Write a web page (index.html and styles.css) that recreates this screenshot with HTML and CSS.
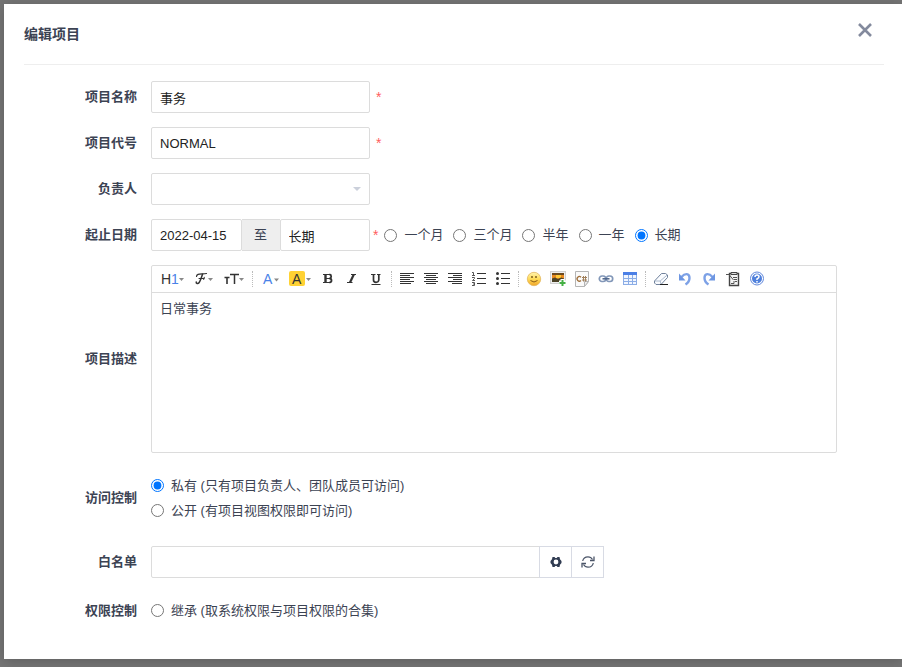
FILE: index.html
```html
<!DOCTYPE html>
<html lang="zh-CN">
<head>
<meta charset="utf-8">
<meta name="viewport" content="width=device-width, initial-scale=1">
<title>编辑项目</title>
<link rel="stylesheet" href="styles.css">
</head>
<body>
<main class="modal">
  <header class="modal-header">
    <h1>编辑项目</h1>
    <button class="close" type="button" aria-label="关闭">
      <svg width="14" height="14" viewBox="0 0 14 14"><path d="M1 1l12 12M13 1L1 13" stroke="#838a9d" stroke-width="2.600" fill="none"/></svg>
    </button>
  </header>
  <form class="form">
    <div class="row">
      <label class="name" for="name">项目名称</label>
      <div class="field"><input class="control" id="name" type="text" value="事务"><span class="required">*</span></div>
    </div>
    <div class="row">
      <label class="name" for="code">项目代号</label>
      <div class="field"><input class="control" id="code" type="text" value="NORMAL"><span class="required">*</span></div>
    </div>
    <div class="row">
      <label class="name" for="owner">负责人</label>
      <div class="field">
        <div class="picker">
          <select class="control" id="owner"><option></option></select>
          <svg class="picker-arrow" width="8" height="4" viewBox="0 0 8 4"><path d="M0 0h8L4 4z" fill="#cbd0db"/></svg>
        </div>
      </div>
    </div>
    <div class="row">
      <label class="name" for="begin">起止日期</label>
      <div class="field dates">
        <div class="range">
          <input class="control" id="begin" type="text" value="2022-04-15">
          <span class="addon">至</span>
          <input class="control" id="end" type="text" value="长期" aria-label="结束日期">
        </div>
        <span class="required">*</span>
        <div class="options">
          <label class="radio"><input type="radio" name="delta">一个月</label>
          <label class="radio"><input type="radio" name="delta">三个月</label>
          <label class="radio"><input type="radio" name="delta">半年</label>
          <label class="radio"><input type="radio" name="delta">一年</label>
          <label class="radio"><input type="radio" name="delta" checked>长期</label>
        </div>
      </div>
    </div>
    <div class="row">
      <label class="name" for="desc">项目描述</label>
      <div class="editor">
        <div class="toolbar">
          <button class="tool wide" type="button" aria-label="标题"><svg width="30" height="24" viewBox="0 0 30 24"><text class="glyph" x="2" y="17" fill="#333">H</text><text class="glyph" x="12" y="17" fill="#4a82e8">1</text><path d="M20 11h5l-2.500 3z" fill="#888"/></svg></button>
          <button class="tool wide" type="button" aria-label="字体"><svg width="30" height="24" viewBox="0 0 30 24"><g fill="none" stroke="#333" stroke-linecap="round"><path d="M7.500 9.500C7.500 6 12 7.300 17.500 6.500" stroke-width="1.200"/><path d="M13.500 7.300c-1 3-2 6.500-3.500 8.400-1 1.300-3 .8-2.800-.6" stroke-width="1.500"/><path d="M10 11.500h5M15.300 10.300l-.6 2.200" stroke-width="1"/></g><path d="M19 11h5l-2.500 3z" fill="#888"/></svg></button>
          <button class="tool wide" type="button" aria-label="字号"><svg width="30" height="24" viewBox="0 0 30 24"><path d="M5.500 10.500h5M8 10.500V17" stroke="#333" stroke-width="1.600"/><path d="M11 7.500h9M15.500 7.500V17" stroke="#333" stroke-width="1.500"/><path d="M20 11h5l-2.500 3z" fill="#888"/></svg></button>
          <span class="sep"></span>
          <button class="tool wide" type="button" aria-label="文字颜色"><svg width="30" height="24" viewBox="0 0 30 24"><text class="glyph" x="7" y="17" fill="#4a82e8">A</text><path d="M18 11.500h5l-2.500 3z" fill="#888"/></svg></button>
          <button class="tool wide" type="button" aria-label="背景颜色"><svg width="30" height="24" viewBox="0 0 30 24"><rect x="3" y="4" width="16" height="15" rx="2" fill="#ffd234"/><text class="glyph" x="6" y="17" fill="#333">A</text><path d="M20 11h5l-2.500 3z" fill="#888"/></svg></button>
          <button class="tool" type="button" aria-label="粗体"><svg width="16" height="16" viewBox="0 0 16 16"><g fill="none" stroke="#333"><path d="M3 3.500h7M3 11.500h7"/><path d="M5.500 3v9" stroke-width="2.400"/><path d="M6 7.500h4" /><path d="M9.500 3.500q1.700.2 1.700 1.900T9.500 7.500q2 .2 2 2t-2 2" stroke-width="1.800"/></g></svg></button>
          <button class="tool" type="button" aria-label="斜体"><svg width="16" height="16" viewBox="0 0 16 16"><path d="M7 3.500h5M3 11.500h5.500" stroke="#333"/><path d="M9.800 3.500L6 11.500" stroke="#333" stroke-width="2.200"/></svg></button>
          <button class="tool" type="button" aria-label="下划线"><svg width="16" height="16" viewBox="0 0 16 16"><path d="M3 3.500h4.500M9 3.500h3.500M3.500 13.500h9" stroke="#333"/><path d="M5.500 3.500V9q0 2.300 2.500 2.300T10.800 9V3.500" fill="none" stroke="#333" stroke-width="1.700"/></svg></button>
          <span class="sep"></span>
          <button class="tool" type="button" aria-label="左对齐"><svg width="16" height="16" viewBox="0 0 16 16"><path d="M1 2.500h14M1 4.500h10M1 6.500h14M1 8.500h10M1 10.500h14M1 12.500h11" stroke="#333"/></svg></button>
          <button class="tool" type="button" aria-label="居中"><svg width="16" height="16" viewBox="0 0 16 16"><path d="M1 2.500h14M3 4.500h10M1 6.500h14M3 8.500h10M1 10.500h14M3 12.500h10" stroke="#333"/></svg></button>
          <button class="tool" type="button" aria-label="右对齐"><svg width="16" height="16" viewBox="0 0 16 16"><path d="M1 2.500h14M6 4.500h9M1 6.500h14M6 8.500h9M1 10.500h14M5 12.500h10" stroke="#333"/></svg></button>
          <button class="tool" type="button" aria-label="编号"><svg width="16" height="16" viewBox="0 0 16 16"><path d="M6 2.500h9M6 7.500h9M6 12.500h9" stroke="#333"/><path d="M1 1.500h1.500V4M1 4.500h3M1 6.500h2.500v1L1.500 9.500H4M1 11.500h2.500v3H1M2 13h1.500" fill="none" stroke="#555"/></svg></button>
          <button class="tool" type="button" aria-label="项目符号"><svg width="16" height="16" viewBox="0 0 16 16"><path d="M6 2.500h9M6 7.500h9M6 12.500h9" stroke="#333"/><g fill="#333"><circle cx="2.500" cy="2.500" r="1.500"/><circle cx="2.500" cy="7.500" r="1.500"/><circle cx="2.500" cy="12.500" r="1.500"/></g></svg></button>
          <span class="sep"></span>
          <button class="tool" type="button" aria-label="表情"><svg width="16" height="16" viewBox="0 0 16 16"><defs><linearGradient id="face" x2="0" y2="1"><stop offset="0" stop-color="#fff3b0"/><stop offset=".5" stop-color="#ffdc58"/><stop offset="1" stop-color="#f0a428"/></linearGradient></defs><circle cx="8" cy="8" r="6.700" fill="url(#face)" stroke="#e3b860" stroke-width=".8"/><path d="M6 5v2M10 5v2" stroke="#6b4a12" stroke-width="1.300"/><path d="M4.500 9.500q3.500 3 7 0" fill="none" stroke="#8a5a14"/></svg></button>
          <button class="tool" type="button" aria-label="图片"><svg width="16" height="16" viewBox="0 0 16 16"><rect x=".5" y=".5" width="15" height="12" fill="#eee" stroke="#d0d0d0"/><rect x="2" y="2" width="12" height="9" fill="#e98a20"/><path d="M2 2h12v2H2z" fill="#6b4a20"/><path d="M6 4h5v3H6z" fill="#ffca36"/><path d="M2 7.500l3-1L8 8l3-1.500 3 1V11H2z" fill="#4b4226"/><path d="M12.500 8v7M9 11.500h7" stroke="#fff" stroke-width="4"/><path d="M12.500 9v6M9.500 12h6" stroke="#45b045" stroke-width="2"/></svg></button>
          <button class="tool" type="button" aria-label="代码"><svg width="16" height="16" viewBox="0 0 16 16"><path d="M1.500.5h13v10l-4 5h-9z" fill="#fafafa" stroke="#b5b5b5"/><path d="M14.500 10.500h-4v5z" fill="#eee" stroke="#b5b5b5"/><path d="M7 6.200A2.300 2.300 0 1 0 7 9.500" fill="none" stroke="#a0703c" stroke-width="1.300"/><path d="M9.500 5v5.500M11.500 5v5.500M8 6.500h5M8 9h5" stroke="#a0805c"/></svg></button>
          <button class="tool" type="button" aria-label="链接"><svg width="16" height="16" viewBox="0 0 16 16"><g fill="none" stroke="#8297b8" stroke-width="1.700"><rect x="1.300" y="5" width="6.500" height="5.500" rx="2.700"/><rect x="8.200" y="5" width="6.500" height="5.500" rx="2.700"/></g><path d="M4.500 7.800h7" stroke="#4b6288" stroke-width="1.500"/></svg></button>
          <button class="tool" type="button" aria-label="表格"><svg width="16" height="16" viewBox="0 0 16 16"><rect x="1" y="1" width="14" height="13" fill="#8badE6"/><path d="M1 1h14v3H1z" fill="#4b7fe6"/><path d="M2 4h4v3H2zm5 0h3v3H7zm4 0h3v3h-3zM2 8h4v2H2zm5 0h3v2H7zm4 0h3v2h-3zM2 11h4v2H2zm5 0h3v2H7zm4 0h3v2h-3z" fill="#f1f6ff"/></svg></button>
          <span class="sep"></span>
          <button class="tool" type="button" aria-label="清除格式"><svg width="16" height="16" viewBox="0 0 16 16"><path d="M8.500 2.500h4L14.500 4v2.500L8 13.500H3L1.500 12v-2z" fill="#fafcff" stroke="#71829c"/><path d="M1.800 10h5.400l7-6M7.200 10L8 13" fill="none" stroke="#9aabc2" stroke-width=".8"/><path d="M7 13.500h8" stroke="#222"/></svg></button>
          <button class="tool" type="button" aria-label="撤销"><svg width="16" height="16" viewBox="0 0 16 16"><path d="M4.500 6C8 2 12.500 2 12.500 7q0 4-4 6.500" fill="none" stroke="#7da1e6" stroke-width="2.400"/><path d="M2 2.500v7h6.500z" fill="#6d96e2"/></svg></button>
          <button class="tool" type="button" aria-label="重做"><svg width="16" height="16" viewBox="0 0 16 16"><path d="M11.500 6C8 2 3.500 2 3.500 7q0 4 4 6.500" fill="none" stroke="#7da1e6" stroke-width="2.400"/><path d="M14 2.500v7H7.500z" fill="#6d96e2"/></svg></button>
          <button class="tool" type="button" aria-label="粘贴"><svg width="16" height="16" viewBox="0 0 16 16"><path d="M4.500 2.500h9v12h-9z" fill="#f5f5f5" stroke="#444" stroke-width="1.400"/><path d="M6 1.500h6v2H6z" fill="#ddd" stroke="#444"/><path d="M1 3.500h3L8.500 9M6 12.500h3V10M8 6.500h4M9 8.500h3M10 10.500h2" fill="none" stroke="#555"/></svg></button>
          <button class="tool" type="button" aria-label="帮助"><svg width="16" height="16" viewBox="0 0 16 16"><circle cx="8" cy="7.500" r="6.500" fill="#fff" stroke="#6289dc"/><circle cx="8" cy="7.500" r="5" fill="#4f80dc"/><path d="M6 6q0-2 2-2t2 1.800Q10 7 8 8v1M8 10v1.500" fill="none" stroke="#fff" stroke-width="1.500"/></svg></button>
        </div>
        <textarea id="desc">日常事务</textarea>
      </div>
    </div>
    <div class="row choice-row">
      <span class="name" id="acl">访问控制</span>
      <div class="choices" role="radiogroup" aria-labelledby="acl">
        <label class="radio"><input type="radio" name="acl" checked>私有 (只有项目负责人、团队成员可访问)</label>
        <label class="radio"><input type="radio" name="acl">公开 (有项目视图权限即可访问)</label>
      </div>
    </div>
    <div class="row">
      <label class="name" for="whitelist">白名单</label>
      <div class="whitelist">
        <input class="control" id="whitelist" type="text">
        <button class="square" type="button" aria-label="设置"><svg width="12" height="12" viewBox="0 0 12 12"><path fill-rule="evenodd" fill="#313c52" d="M2.500 1h2l.8.900h1.400L7.500 1h2l.5 2.200L11.500 5v2L10 8.800 9.500 11h-2l-.8-.9H5.300l-.8.9h-2L2 8.800.5 7V5L2 3.200zM6 3.600a2.400 2.400 0 1 0 0 4.800 2.400 2.400 0 0 0 0-4.800z"/></svg></button>
        <button class="square" type="button" aria-label="刷新"><svg width="14" height="14" viewBox="0 0 14 14"><path d="M1.700 6Q2.500 1.800 7 1.800 10 1.800 11.500 4.500M12.300 8Q11.500 12.200 7 12.200 4 12.200 2.500 9.500" fill="none" stroke="#4b5568" stroke-width="1.200"/><path d="M13 1.500v4H9M1 12.500v-4h4" fill="none" stroke="#4b5568" stroke-width="1.300"/></svg></button>
      </div>
    </div>
    <div class="row choice-row">
      <span class="name" id="auth">权限控制</span>
      <div class="choices" role="radiogroup" aria-labelledby="auth">
        <label class="radio"><input type="radio" name="auth">继承 (取系统权限与项目权限的合集)</label>
      </div>
    </div>
  </form>
</main>
</body>
</html>
```
FILE: styles.css
```css
* {
  box-sizing: border-box;
}

html {
  min-height: 100%;
  background: #757575;
}

body {
  margin: 0;
  padding: 4px 0 8px 4px;
  color: #3c4353;
  font: 13px/20px "Liberation Sans", "Noto Sans CJK SC", sans-serif;
}

input,
select,
textarea,
button {
  margin: 0;
  font: inherit;
  color: inherit;
}

.modal {
  padding: 0 18px 27px 20px;
  background: #fff;
  box-shadow: 0 2px 12px rgba(0, 0, 0, 0.2);
}

.modal-header {
  display: flex;
  align-items: center;
  justify-content: space-between;
  height: 61px;
  padding-right: 10px;
  border-bottom: 1px solid #eee;
}

.modal-header h1 {
  margin: 0;
  font-size: 14px;
}

.close {
  display: flex;
  margin-bottom: 8px;
  padding: 2px;
  border: 0;
  background: none;
}

.form {
  display: flex;
  flex-direction: column;
  gap: 14px;
  padding-top: 16px;
}

.row {
  display: grid;
  grid-template-columns: 113px minmax(0, 1fr);
  column-gap: 14px;
  align-items: center;
}

.name {
  font-weight: 700;
  text-align: right;
}

.field {
  display: flex;
  align-items: center;
  gap: 6px;
}

.control {
  width: 219px;
  height: 32px;
  padding: 5px 8px;
  border: 1px solid #dcdcdc;
  border-radius: 2px;
  background: #fff;
  color: #222;
}

.required {
  color: #ff5d5d;
  font-size: 14px;
}

.picker {
  position: relative;
}

.picker .control {
  display: block;
  appearance: none;
}

.picker-arrow {
  position: absolute;
  top: 14px;
  right: 9px;
  pointer-events: none;
}

.dates {
  gap: 3px;
}

.range {
  display: flex;
  width: 219px;
}

.range .control {
  flex: 1;
  width: 0;
}

.addon {
  width: 38px;
  border: solid #dcdcdc;
  border-width: 1px 0;
  background: #eee;
  line-height: 30px;
  text-align: center;
}

.options {
  display: flex;
  gap: 10px;
  margin-left: 3px;
}

.radio {
  display: flex;
  align-items: center;
  gap: 7px;
  white-space: nowrap;
}

.radio input {
  width: 13px;
  height: 13px;
}

.editor {
  margin-right: 47px;
  border: 1px solid #dcdcdc;
  border-radius: 2px;
}

.toolbar {
  display: flex;
  align-items: center;
  height: 27px;
  padding-left: 7px;
  border-bottom: 1px solid #dcdcdc;
}

.tool {
  display: flex;
  align-items: center;
  justify-content: center;
  width: 24px;
  height: 24px;
  padding: 0;
  border: 0;
  background: none;
}

.wide {
  width: 30px;
}

.glyph {
  font: 14px "Liberation Sans", sans-serif;
}

.sep {
  height: 16px;
  margin: 0 3px;
  border-left: 1px dotted #bbb;
}

.editor textarea {
  display: block;
  width: 100%;
  height: 159px;
  padding: 6px 8px;
  border: 0;
  outline: 0;
  background: transparent;
  resize: none;
}

.choice-row {
  padding: 6px 0 9px;
}

.choices .radio {
  height: 25px;
}

.whitelist {
  display: flex;
  max-width: 453px;
}

.whitelist .control {
  flex: 1;
  border-radius: 2px 0 0 2px;
}

.square {
  display: flex;
  align-items: center;
  justify-content: center;
  width: 33px;
  height: 32px;
  margin-left: -1px;
  padding: 0;
  border: 1px solid #d8dbe4;
  background: #fff;
}
```
